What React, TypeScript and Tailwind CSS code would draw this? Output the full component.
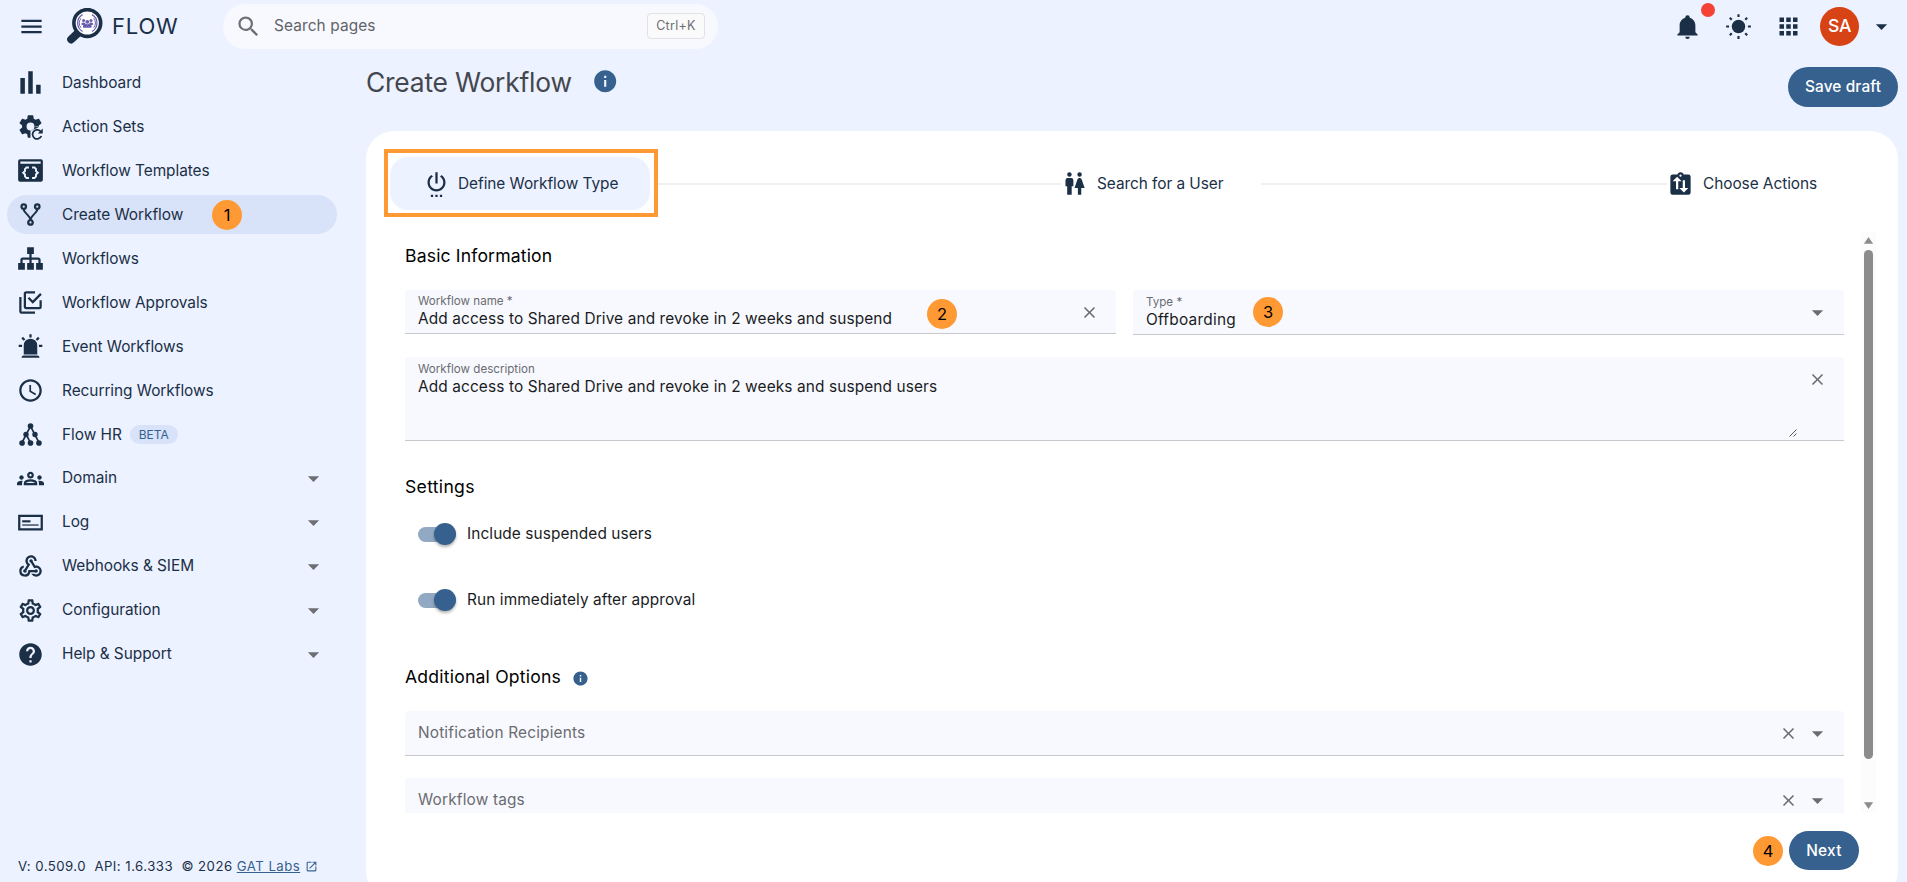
import type { ReactNode } from 'react';
import {
  MdApps,
  MdArrowDropDown,
  MdClose,
  MdHelp,
  MdInfo,
  MdMenu,
  MdOpenInNew,
  MdOutlineGroups,
  MdOutlineSettings,
  MdSchedule,
  MdSearch,
  MdSettingsPower,
  MdWebhook,
} from 'react-icons/md';

const icons = {
  poll: 'M3,22V8H7V22H3M10,22V2H14V22H10M17,22V14H21V22H17Z',
  fork: 'M6,2A3,3 0 0,1 9,5C9,6.28 8.19,7.38 7.06,7.81C7.15,8.27 7.39,8.83 8,9.63C9,10.92 11,12.83 12,14.17C13,12.83 15,10.92 16,9.63C16.61,8.83 16.85,8.27 16.94,7.81C15.81,7.38 15,6.28 15,5A3,3 0 0,1 18,2A3,3 0 0,1 21,5C21,6.32 20.14,7.45 18.95,7.85C18.87,8.37 18.64,9 18,9.83C17,11.17 15,13.08 14,14.38C13.39,15.17 13.15,15.73 13.06,16.19C14.19,16.62 15,17.72 15,19A3,3 0 0,1 12,22A3,3 0 0,1 9,19C9,17.72 9.81,16.62 10.94,16.19C10.85,15.73 10.61,15.17 10,14.38C9,13.08 7,11.17 6,9.83C5.36,9 5.13,8.37 5.05,7.85C3.86,7.45 3,6.32 3,5A3,3 0 0,1 6,2M6,4A1,1 0 0,0 5,5A1,1 0 0,0 6,6A1,1 0 0,0 7,5A1,1 0 0,0 6,4M18,4A1,1 0 0,0 17,5A1,1 0 0,0 18,6A1,1 0 0,0 19,5A1,1 0 0,0 18,4M12,18A1,1 0 0,0 11,19A1,1 0 0,0 12,20A1,1 0 0,0 13,19A1,1 0 0,0 12,18Z',
  sitemap:
    'M9,2V8H11V11H5C3.89,11 3,11.89 3,13V16H1V22H7V16H5V13H11V16H9V22H15V16H13V13H19V16H17V22H23V16H21V13C21,11.89 20.11,11 19,11H13V8H15V2H9Z',
  approvals:
    'M20,16V10H22V16A2,2 0 0,1 20,18H8C6.89,18 6,17.1 6,16V4C6,2.89 6.89,2 8,2H16V4H8V16H20M10.91,7.08L14,10.17L20.59,3.58L22,5L14,13L9.5,8.5L10.91,7.08M16,20V22H4A2,2 0 0,1 2,20V7H4V20H16Z',
  alarm:
    'M6,6.9L3.87,4.78L5.28,3.37L7.4,5.5L6,6.9M13,1V4H11V1H13M20.13,4.78L18,6.9L16.6,5.5L18.72,3.37L20.13,4.78M4.5,10.5V12.5H1.5V10.5H4.5M19.5,10.5H22.5V12.5H19.5V10.5M6,20H18A2,2 0 0,1 20,22H4A2,2 0 0,1 6,20M12,5A6,6 0 0,1 18,11V19H6V11A6,6 0 0,1 12,5Z',
  bell: 'M21,19V20H3V19L5,17V11C5,7.9 7.03,5.17 10,4.29C10,4.19 10,4.1 10,4A2,2 0 0,1 12,2A2,2 0 0,1 14,4C14,4.1 14,4.19 14,4.29C16.97,5.17 19,7.9 19,11V17L21,19M14,21A2,2 0 0,1 12,23A2,2 0 0,1 10,21',
  people:
    'M7.5,2A2,2 0 0,1 9.5,4A2,2 0 0,1 7.5,6A2,2 0 0,1 5.5,4A2,2 0 0,1 7.5,2M6,7H9A2,2 0 0,1 11,9V14.5H9.5V22H5.5V14.5H4V9A2,2 0 0,1 6,7M16.5,2A2,2 0 0,1 18.5,4A2,2 0 0,1 16.5,6A2,2 0 0,1 14.5,4A2,2 0 0,1 16.5,2M15,22V16H12L14.59,8.41C14.84,7.59 15.6,7 16.5,7C17.4,7 18.16,7.59 18.41,8.41L21,16H18V22H15Z',
  clipboard:
    'M19,4H14.82C14.25,2.44 12.53,1.64 11,2.2C10.14,2.5 9.5,3.16 9.18,4H5A2,2 0 0,0 3,6V20A2,2 0 0,0 5,22H19A2,2 0 0,0 21,20V6A2,2 0 0,0 19,4M12,4A1,1 0 0,1 13,5A1,1 0 0,1 12,6A1,1 0 0,1 11,5A1,1 0 0,1 12,4M10,17H8V10H5L9,6L13,10H10V17M15,20L11,16H14V9H16V16H19L15,20Z',
  cog: 'M12,15.5A3.5,3.5 0 0,1 8.5,12A3.5,3.5 0 0,1 12,8.5A3.5,3.5 0 0,1 15.5,12A3.5,3.5 0 0,1 12,15.5M19.43,12.97C19.47,12.65 19.5,12.33 19.5,12C19.5,11.67 19.47,11.34 19.43,11L21.54,9.37C21.73,9.22 21.78,8.95 21.66,8.73L19.66,5.27C19.54,5.05 19.27,4.96 19.05,5.05L16.56,6.05C16.04,5.66 15.5,5.32 14.87,5.07L14.5,2.42C14.46,2.18 14.25,2 14,2H10C9.75,2 9.54,2.18 9.5,2.42L9.13,5.07C8.5,5.32 7.96,5.66 7.44,6.05L4.95,5.05C4.73,4.96 4.46,5.05 4.34,5.27L2.34,8.73C2.21,8.95 2.27,9.22 2.46,9.37L4.57,11C4.53,11.34 4.5,11.67 4.5,12C4.5,12.33 4.53,12.65 4.57,12.97L2.46,14.63C2.27,14.78 2.21,15.05 2.34,15.27L4.34,18.73C4.46,18.95 4.73,19.03 4.95,18.95L7.44,17.94C7.96,18.34 8.5,18.68 9.13,18.93L9.5,21.58C9.54,21.82 9.75,22 10,22H12V15.5M14.5,12H19.43V12.97Z',
};

function Icon({ path }: { path: string }) {
  return (
    <svg viewBox="0 0 24 24" className="size-[27px] shrink-0 fill-current">
      <path d={path} />
    </svg>
  );
}

function CogRefreshIcon() {
  return (
    <svg viewBox="0 0 24 24" className="size-[27px] shrink-0 fill-current">
      <path d={icons.cog} />
      <path
        d="M21.3 17A4 4 0 1 0 21.6 20.4"
        fill="none"
        stroke="currentColor"
        strokeWidth="1.6"
      />
      <path d="M22.9 13.8v4.4h-4.4z" />
    </svg>
  );
}

function TemplateIcon() {
  return (
    <svg viewBox="0 0 24 24" className="size-[27px] shrink-0 fill-current">
      <rect x="1" y="2" width="22" height="20" rx="1.8" />
      <rect x="3" y="4" width="18" height="2" fill="#ecf2ff" />
      <path
        d="M10.6 9.4H8.4L7.1 10.7v1.8L5.5 14l1.6 1.5v1.8l1.3 1.3h2.2M13.4 9.4h2.2l1.3 1.3v1.8l1.6 1.5-1.6 1.5v1.8l-1.3 1.3h-2.2"
        fill="none"
        stroke="#ecf2ff"
        strokeWidth="1.7"
      />
    </svg>
  );
}

function TreeIcon() {
  return (
    <svg viewBox="0 0 24 24" className="size-[27px] shrink-0 fill-current">
      <path
        d="M12 4.5 8.2 12 4.3 19.5M12 4.5l3.8 7.5 3.9 7.5M8.2 12l3.8 7.5"
        fill="none"
        stroke="currentColor"
        strokeWidth="1.5"
      />
      <circle cx="12" cy="4.4" r="2.5" />
      <circle cx="8" cy="12" r="2.4" />
      <circle cx="16" cy="12" r="2.4" />
      <circle cx="4.5" cy="19.5" r="2.5" />
      <circle cx="12" cy="19.5" r="2.5" />
      <circle cx="19.5" cy="19.5" r="2.5" />
    </svg>
  );
}

function LogIcon() {
  return (
    <svg viewBox="0 0 24 24" className="size-[27px] shrink-0 fill-current">
      <path fillRule="evenodd" d="M1 5h22v14H1zM3 7v10h18V7z" />
      <rect x="4.6" y="10" width="7.4" height="1.9" />
      <rect x="4.6" y="13.7" width="14.6" height="1.1" />
    </svg>
  );
}

function SunIcon() {
  return (
    <svg viewBox="0 0 24 24" className="size-[27px] fill-current">
      <circle cx="12" cy="12" r="6" />
      <path
        d="M12 1v2.6M12 20.4V23M1 12h2.6M20.4 12H23M4.3 4.3 6 6M18 18l1.7 1.7M4.3 19.7 6 18M18 6l1.7-1.7"
        stroke="currentColor"
        strokeWidth="1.9"
      />
    </svg>
  );
}

function Logo() {
  return (
    <svg viewBox="0 0 36 36" className="size-9">
      <path d="M11.5 24.5 4.2 31.4" stroke="#1b2f47" strokeWidth="8" strokeLinecap="round" />
      <circle cx="20.3" cy="15" r="13.4" fill="#fff" stroke="#1b2f47" strokeWidth="3.6" />
      <g fill="none" stroke="#6a5fae" strokeWidth="1.2">
        <path d="M15.6 6.6a9.6 9.6 0 0 0 0 16.8M25 6.6a9.6 9.6 0 0 1 0 16.8" />
        <path d="M13.9 10.3a7.9 7.9 0 0 0 0 9.4M26.7 10.3a7.9 7.9 0 0 1 0 9.4" strokeWidth="1" />
      </g>
      <g fill="#6a5fae">
        <circle cx="16.6" cy="12.4" r="1.5" />
        <circle cx="24" cy="12.4" r="1.5" />
        <circle cx="20.3" cy="13.8" r="1.9" />
        <path d="M14.2 16.6c0-2.4 3.4-2.6 4.2-1.2.5 1 3.3 1 3.8 0 .8-1.4 4.2-1.2 4.2 1.2l-2 .6c.4.8.4 1.7 0 2.6h-8.2c-.4-.9-.4-1.8 0-2.6z" />
      </g>
    </svg>
  );
}

type NavItem = { label: string; icon: ReactNode; active?: boolean; beta?: boolean; expandable?: boolean };

const navItems: NavItem[] = [
  { label: 'Dashboard', icon: <Icon path={icons.poll} /> },
  { label: 'Action Sets', icon: <CogRefreshIcon /> },
  { label: 'Workflow Templates', icon: <TemplateIcon /> },
  { label: 'Create Workflow', icon: <Icon path={icons.fork} />, active: true },
  { label: 'Workflows', icon: <Icon path={icons.sitemap} /> },
  { label: 'Workflow Approvals', icon: <Icon path={icons.approvals} /> },
  { label: 'Event Workflows', icon: <Icon path={icons.alarm} /> },
  { label: 'Recurring Workflows', icon: <MdSchedule className="size-[27px]" /> },
  { label: 'Flow HR', icon: <TreeIcon />, beta: true },
  { label: 'Domain', icon: <MdOutlineGroups className="size-[27px]" />, expandable: true },
  { label: 'Log', icon: <LogIcon />, expandable: true },
  { label: 'Webhooks & SIEM', icon: <MdWebhook className="size-[27px]" />, expandable: true },
  { label: 'Configuration', icon: <MdOutlineSettings className="size-[27px]" />, expandable: true },
  { label: 'Help & Support', icon: <MdHelp className="size-[27px]" />, expandable: true },
];

function Badge({ n }: { n: number }) {
  return (
    <span className="flex size-[30px] shrink-0 items-center justify-center rounded-full bg-[#ff9933] text-[16.5px] tracking-normal text-black">
      {n}
    </span>
  );
}

function Sidebar() {
  return (
    <aside className="flex w-[366px] shrink-0 flex-col justify-between">
      <nav className="flex flex-col gap-[5px] pt-[11px] pl-[7px] tracking-[-0.04px]">
        {navItems.map((item) => (
          <a
            key={item.label}
            className={`flex h-[39px] w-[330px] items-center rounded-full pr-[10px] pl-[10px] ${item.active ? 'bg-[#d8e2f9]' : ''}`}
          >
            {item.icon}
            <span className={`ml-[18px] ${item.expandable ? 'pb-[2px]' : 'pt-px'}`}>{item.label}</span>
            {item.beta && (
              <span className="ml-2 flex h-[19px] items-center rounded-full bg-[#d8e2f9] px-[9px] text-[12px] text-[#36618e]">
                BETA
              </span>
            )}
            {item.active && (
              <span className="ml-[29px]">
                <Badge n={1} />
              </span>
            )}
            {item.expandable && <MdArrowDropDown className="ml-auto size-[27px] text-[#6e6e73]" />}
          </a>
        ))}
      </nav>
      <footer className="flex items-center pb-[6px] pl-[18px] text-[13.2px] tracking-[0.47px] whitespace-pre">
        V: 0.509.0  API: 1.6.333  © 2026{' '}
        <a className="text-[#36618e] underline">GAT Labs</a>
        <MdOpenInNew className="ml-[5px] size-[13px] text-[#36618e]" />
      </footer>
    </aside>
  );
}

function Toggle({ label }: { label: string }) {
  return (
    <label className="flex h-[22px] items-center pl-[13px] tracking-[0.1px] text-[#1a1c1e]">
      <span className="flex h-[15px] w-[38px] items-center justify-end rounded-full bg-[#91a9c3]">
        <span className="size-[22px] shrink-0 rounded-full bg-[#36618e] shadow-[0_2px_3px_rgba(0,0,0,0.3)]" />
      </span>
      <span className="ml-[11px]">{label}</span>
    </label>
  );
}

function EmptySelect({ label }: { label: string }) {
  return (
    <div className="flex h-[45px] shrink-0 items-center rounded-t-[4px] border-b border-[#c8c9ce] bg-[#f8f9ff] pr-[13.5px] pl-[13px] text-[#6b6c70]">
      <span className="grow pb-px tracking-[0.17px]">{label}</span>
      <MdClose className="mr-[6px] size-[19px]" />
      <MdArrowDropDown className="size-[27px]" />
    </div>
  );
}

export default function App() {
  return (
    <div className="flex h-[882px] flex-col overflow-hidden bg-[#ecf2ff] font-[Inter,sans-serif] text-[15.4px] leading-[20px] tracking-[0.12px] text-[#1b2f47]">
      {/* Top bar */}
      <header className="flex h-[52px] shrink-0 items-center pl-[17.5px]">
        <MdMenu className="size-[27px]" />
        <div className="ml-[22px]">
          <Logo />
        </div>
        <span className="ml-[9.5px] w-[68px] text-[22px] tracking-[0.8px]">FLOW</span>
        <div className="ml-[43px] flex h-[45px] w-[495px] items-center rounded-full bg-[#f8f9ff] pr-[13px] pl-[12px] text-[#5f6368]">
          <MdSearch className="size-[27px] text-[#6e6e73]" />
          <span className="ml-3 grow">Search pages</span>
          <kbd className="flex h-[26px] w-[58px] items-center justify-center rounded-[4px] border border-[#e2e2e4] bg-[#fafafa] font-[Inter,sans-serif] text-[12.5px] tracking-[0.3px] text-[#6e6e73]">
            Ctrl+K
          </kbd>
        </div>
        <div className="ml-auto flex items-center">
          <div className="relative">
            <Icon path={icons.bell} />
            <span className="absolute -top-[10px] left-[27px] size-[14px] rounded-full bg-[#f44336]" />
          </div>
          <div className="ml-6">
            <SunIcon />
          </div>
          <MdApps className="ml-[23px] size-[27px]" />
          <span className="ml-[18px] flex size-[39px] items-center justify-center rounded-full bg-[#d84315] text-[17.6px] font-medium tracking-[-0.4px] text-white">
            SA
          </span>
          <MdArrowDropDown className="mr-3 ml-[9px] size-[27px]" />
        </div>
      </header>

      <div className="flex min-h-0 grow">
        <Sidebar />

        <main className="flex w-[1532px] shrink-0 flex-col">
          <div className="flex h-[79px] shrink-0 justify-between">
            <div className="flex h-[59px] items-center">
              <h1 className="text-[26.4px] leading-[36px] tracking-[-0.2px] text-[#44474e]">Create Workflow</h1>
              <MdInfo className="ml-5 size-[26.4px] text-[#36618e]" />
            </div>
            <button className="mt-[15px] h-10 w-[110px] rounded-full bg-[#36618e] font-medium text-white">
              Save draft
            </button>
          </div>

          <section className="flex h-[768px] shrink-0 flex-col rounded-[28px] bg-white">
            {/* Stepper */}
            <div className="flex h-[101px] shrink-0 items-center pt-[3px] pl-[18px] tracking-[-0.05px]">
              <div className="flex h-[68px] w-[274px] shrink-0 items-center border-4 border-[#ff9933] pl-[2px]">
                <div className="mt-px flex h-[53px] w-[260px] items-center rounded-[18px] bg-[#ecf2ff] pl-[33px]">
                  <MdSettingsPower className="size-[27px]" />
                  <span className="ml-2">Define Workflow Type</span>
                </div>
              </div>
              <div className="mt-px h-[2px] w-[403px] bg-[#efefef]" />
              <div className="mt-px flex items-center">
                <Icon path={icons.people} />
                <span className="ml-[9px] w-[164px]">Search for a User</span>
              </div>
              <div className="mt-px h-[2px] w-[406px] bg-[#efefef]" />
              <div className="mt-px flex items-center">
                <Icon path={icons.clipboard} />
                <span className="ml-[9px]">Choose Actions</span>
              </div>
            </div>

            {/* Form */}
            <div className="flex h-[581px] shrink-0">
              <div className="flex w-[1478px] flex-col overflow-hidden pt-[14px] pl-[39px]">
                <h2 className="text-[17.6px] tracking-[0.15px] text-black">Basic Information</h2>
                <div className="mt-[24px] flex gap-[17px]">
                  <div className="flex h-[44px] w-[711px] items-center rounded-t-[4px] border-b border-[#c8c9ce] bg-[#f8f9ff] pr-[17px] pl-[13px]">
                    <div className="mb-px flex flex-col">
                      <span className="text-[11.6px] leading-[16px] tracking-normal text-[#6b6c70]">Workflow name *</span>
                      <span className="text-[#1a1c1e]">Add access to Shared Drive and revoke in 2 weeks and suspend</span>
                    </div>
                    <div className="mt-1 ml-[35px] grow">
                      <Badge n={2} />
                    </div>
                    <MdClose className="mt-px size-[19px] text-[#6b6c70]" />
                  </div>
                  <div className="flex h-[45px] w-[711px] items-center rounded-t-[4px] border-b border-[#c8c9ce] bg-[#f8f9ff] pr-[13.5px] pl-[13px]">
                    <div className="mb-px flex flex-col">
                      <span className="text-[11.6px] leading-[16px] tracking-normal text-[#6b6c70]">Type *</span>
                      <span className="tracking-[0.25px] text-[#1a1c1e]">Offboarding</span>
                    </div>
                    <div className="ml-[17px] grow">
                      <Badge n={3} />
                    </div>
                    <MdArrowDropDown className="size-[27px] text-[#6b6c70]" />
                  </div>
                </div>

                <div className="mt-[22px] flex h-[84px] w-[1439px] shrink-0 rounded-t-[4px] border-b border-[#c8c9ce] bg-[#f8f9ff] pt-[4px] pr-[17px] pl-[13px]">
                  <div className="flex grow flex-col">
                    <span className="text-[11.6px] leading-[16px] tracking-normal text-[#6b6c70]">Workflow description</span>
                    <span className="text-[#1a1c1e]">Add access to Shared Drive and revoke in 2 weeks and suspend users</span>
                  </div>
                  <svg viewBox="0 0 8 8" className="mr-[11px] mb-[3px] size-2 self-end">
                    <path d="M0.5 7.5l7-7M4.5 7.5l3-3" stroke="#55565a" strokeWidth="1" />
                  </svg>
                  <MdClose className="mt-[9px] size-[19px] text-[#6b6c70]" />
                </div>

                <h2 className="mt-9 text-[17.6px] tracking-[0.3px] text-black">Settings</h2>
                <div className="mt-[26px] flex flex-col gap-11">
                  <Toggle label="Include suspended users" />
                  <Toggle label="Run immediately after approval" />
                </div>

                <div className="mt-[56px] flex items-center">
                  <h2 className="text-[17.6px] tracking-[0.2px] text-black">Additional Options</h2>
                  <MdInfo className="mt-[2px] ml-[11px] size-[17px] text-[#36618e]" />
                </div>
                <div className="mt-[24px] flex w-[1439px] flex-col gap-[22px]">
                  <EmptySelect label="Notification Recipients" />
                  <EmptySelect label="Workflow tags" />
                </div>
              </div>

              {/* Scrollbar */}
              <div className="ml-[17px] flex w-[15px] flex-col items-center bg-[#fcfcfc] pt-[5px] pb-[4px]">
                <svg viewBox="0 0 9 7" className="h-[7px] w-[9px] fill-[#8b8b8b]">
                  <path d="M4.5 0.5 8.6 6.6H.4z" stroke="#8b8b8b" strokeLinejoin="round" strokeWidth=".6" />
                </svg>
                <div className="mt-[6px] h-[509px] w-[9px] rounded-full bg-[#8b8b8b]" />
                <svg viewBox="0 0 9 7" className="mt-auto h-[7px] w-[9px] fill-[#8b8b8b]">
                  <path d="M4.5 6.5.4.4h8.2z" stroke="#8b8b8b" strokeLinejoin="round" strokeWidth=".6" />
                </svg>
              </div>
            </div>

            <div className="mt-[18px] flex items-center justify-end gap-[6px] pr-[39px]">
              <Badge n={4} />
              <button className="h-[39px] w-[70px] rounded-full bg-[#36618e] font-medium tracking-[0.3px] text-white">
                Next
              </button>
            </div>
          </section>
        </main>
      </div>
    </div>
  );
}
